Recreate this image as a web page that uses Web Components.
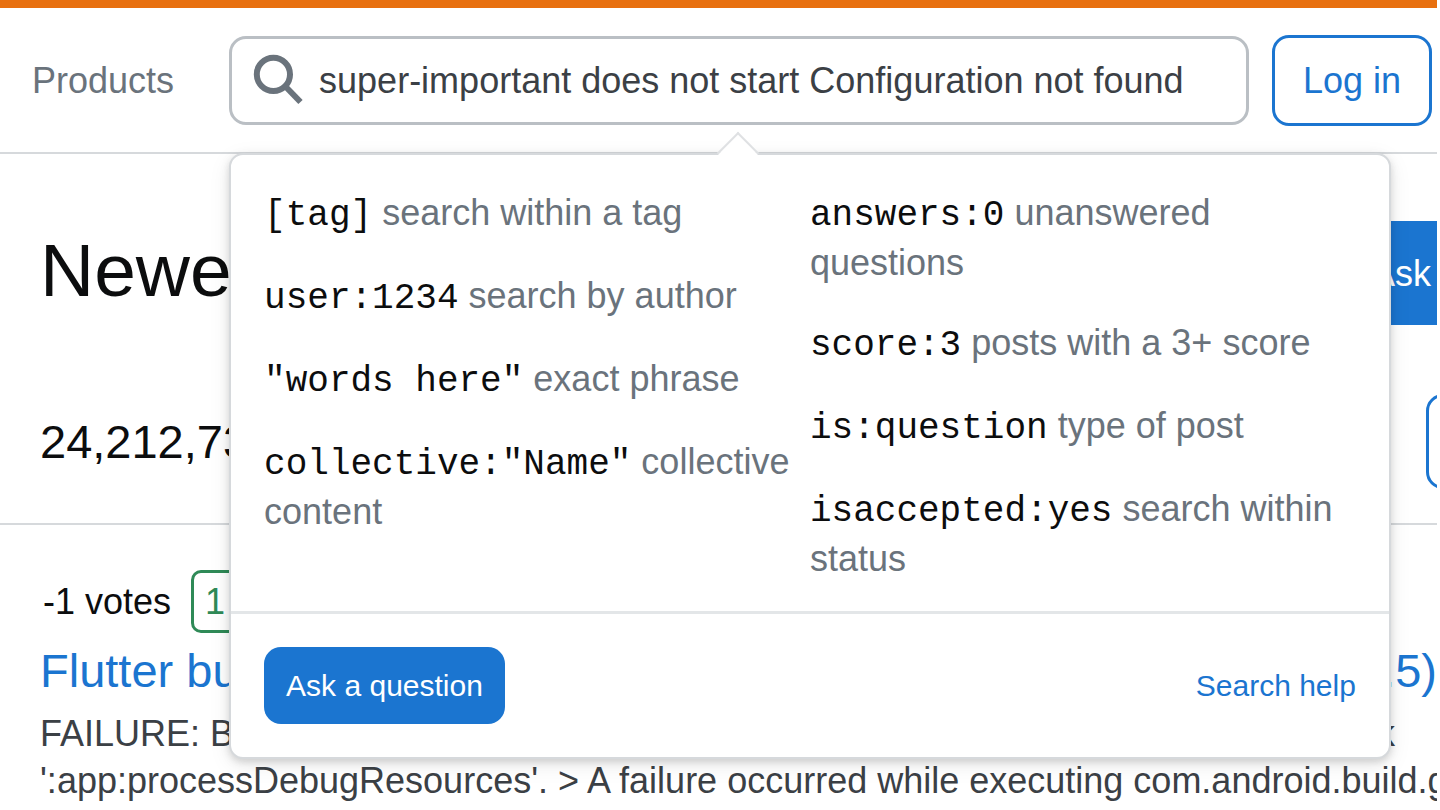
<!DOCTYPE html>
<html lang="en">
<head>
<meta charset="utf-8">
<meta name="viewport" content="width=device-width, initial-scale=1">
<title>Newest Questions</title>
<style>
    :root {
        --orange: #e8700f;
        --blue: #1b75d0;
        --grey: #6a737c;
        --text: #3b4045;
        --line: #d6d9dc;
        --green: #2f8a57;
    }
    body {
        margin: 0;
        background: #fff;
        color: #0c0d0e;
        font: 36px/47px "Liberation Sans", Arial, sans-serif;
    }
</style>
</head>
<body>
<so-page>
    <so-topbar slot="top">
        <so-search value="super-important does not start Configuration not found">
            <so-search-popover>
                <so-hint slot="left" code="[tag]">search within a tag</so-hint>
                <so-hint slot="left" code="user:1234">search by author</so-hint>
                <so-hint slot="left" code='"words here"'>exact phrase</so-hint>
                <so-hint slot="left" code='collective:"Name"'>collective content</so-hint>
                <so-hint slot="right" code="answers:0">unanswered questions</so-hint>
                <so-hint slot="right" code="score:3">posts with a 3+ score</so-hint>
                <so-hint slot="right" code="is:question">type of post</so-hint>
                <so-hint slot="right" code="isaccepted:yes">search within status</so-hint>
            </so-search-popover>
        </so-search>
    </so-topbar>
    <so-question-head></so-question-head>
    <so-question-summary>
        <span slot="votes">-1 votes</span>
        <span slot="answers">1</span>
        <span slot="title">Flutter bu</span>
        <span slot="title-end">.5)</span>
        <span slot="excerpt">FAILURE: B</span>
        <span slot="excerpt-end">k</span>
        <span slot="excerpt-more">':app:processDebugResources'. &gt; A failure occurred while executing com.android.build.g</span>
    </so-question-summary>
</so-page>

<script>
class SoPage extends HTMLElement {
    constructor() {
        super();
        this.attachShadow({ mode: "open" }).innerHTML = `
            <style>
                :host {
                    display: block;
                    min-height: 100vh;
                    margin-right: 3px;
                    overflow: hidden;
                }
            </style>
            <slot name="top"></slot>
            <main><slot></slot></main>
        `;
    }
}

class SoTopbar extends HTMLElement {
    constructor() {
        super();
        this.attachShadow({ mode: "open" }).innerHTML = `
            <style>
                :host {
                    display: block;
                    position: relative;
                    z-index: 1;
                }
                header {
                    display: flex;
                    align-items: center;
                    padding: 27px 5px 26px 32px;
                    border-top: 8px solid var(--orange);
                    border-bottom: 2px solid var(--line);
                }
                .products {
                    margin-right: 55px;
                    color: var(--grey);
                    text-decoration: none;
                }
                ::slotted(so-search) {
                    flex: 1;
                    margin-right: 23px;
                }
                .login {
                    padding: 19px 28px;
                    border: 3px solid var(--blue);
                    border-radius: 17px;
                    background: #fff;
                    color: var(--blue);
                    font: inherit;
                    cursor: pointer;
                }
            </style>
            <header>
                <a class="products" href="#">Products</a>
                <slot></slot>
                <button class="login" type="button">Log in</button>
            </header>
        `;
    }
}

class SoSearch extends HTMLElement {
    constructor() {
        super();
        this.attachShadow({ mode: "open" }).innerHTML = `
            <style>
                :host {
                    display: block;
                    position: relative;
                    min-width: 0;
                }
                form {
                    display: flex;
                    align-items: center;
                    gap: 17px;
                    padding: 17px 21px;
                    border: 3px solid #babfc4;
                    border-radius: 17px;
                    background: #fff;
                }
                svg {
                    flex: none;
                    width: 49px;
                    height: 49px;
                    overflow: visible;
                }
                input {
                    flex: 1;
                    min-width: 0;
                    padding: 0;
                    border: 0;
                    outline: 0;
                    background: none;
                    color: var(--text);
                    font: inherit;
                }
            </style>
            <form role="search">
                <svg viewBox="0 0 49 49" fill="none" stroke="#6a737c" stroke-width="6" aria-hidden="true">
                    <circle cx="20.4" cy="18.4" r="16.6"/>
                    <path d="M31.500 29.500 47.500 46"/>
                </svg>
                <input type="text" aria-label="Search">
            </form>
            <slot></slot>
        `;
    }

    connectedCallback() {
        this.shadowRoot.querySelector("input").value = this.getAttribute("value") || "";
    }
}

class SoSearchPopover extends HTMLElement {
    constructor() {
        super();
        this.attachShadow({ mode: "open" }).innerHTML = `
            <style>
                /* hangs below the search box and runs past its right edge */
                :host {
                    display: block;
                    position: absolute;
                    top: calc(100% + 28px);
                    left: 0;
                    right: -142px;
                    border: 2px solid var(--line);
                    border-radius: 14px;
                    background: #fff;
                    box-shadow: 0 3px 6px rgba(0,0,0,.08), 0 3px 11px rgba(0,0,0,.08), 0 6px 22px rgba(0,0,0,.08);
                }
                .arrow {
                    position: absolute;
                    top: -17px;
                    left: 492px;
                    width: 28px;
                    height: 28px;
                    border: solid #dfe1e3;
                    border-width: 2px 0 0 2px;
                    background: linear-gradient(135deg, #fff 60%, transparent 60%);
                    transform: rotate(45deg);
                }
                .hints {
                    display: flex;
                    padding: 34px 33px 29px;
                }
                .col {
                    display: flex;
                    flex: 1 1 0;
                    flex-direction: column;
                    gap: 33px;
                    min-width: 0;
                }
                .foot {
                    display: flex;
                    align-items: center;
                    justify-content: space-between;
                    padding: 33px;
                    border-top: 3px solid #e3e6e8;
                    font-size: 30px;
                    line-height: 41px;
                }
                button {
                    padding: 18px 22px;
                    border: 0;
                    border-radius: 17px;
                    background: var(--blue);
                    color: #fff;
                    font: inherit;
                    cursor: pointer;
                }
                a {
                    color: var(--blue);
                    text-decoration: none;
                }
            </style>
            <div class="arrow"></div>
            <div class="hints">
                <div class="col"><slot name="left"></slot></div>
                <div class="col"><slot name="right"></slot></div>
            </div>
            <div class="foot">
                <button type="button">Ask a question</button>
                <a href="#">Search help</a>
            </div>
        `;
    }
}

class SoHint extends HTMLElement {
    constructor() {
        super();
        this.attachShadow({ mode: "open" }).innerHTML = `
            <style>
                :host {
                    display: block;
                    color: var(--grey);
                }
                code {
                    color: #0c0d0e;
                    font-family: "Liberation Mono", monospace;
                    font-size: 36px;
                }
            </style>
            <code></code> <slot></slot>
        `;
    }

    connectedCallback() {
        this.shadowRoot.querySelector("code").textContent = this.getAttribute("code");
    }
}

class SoQuestionHead extends HTMLElement {
    constructor() {
        super();
        this.attachShadow({ mode: "open" }).innerHTML = `
            <style>
                :host {
                    display: block;
                    padding-top: 67px;
                    border-bottom: 2px solid var(--line);
                }
                .row {
                    display: flex;
                    justify-content: space-between;
                    padding-left: 40px;
                }
                h1 {
                    margin: 0;
                    font-size: 75px;
                    font-weight: 400;
                    line-height: 98px;
                }
                .ask {
                    padding: 29px 6px 28px 28px;
                    border: 0;
                    background: var(--blue);
                    color: #fff;
                    font: inherit;
                }
                .count {
                    align-items: center;
                    padding-top: 69px;
                    padding-bottom: 34px;
                    font-size: 47px;
                }
                /* the sort button runs off the right edge */
                .sort {
                    width: 120px;
                    height: 95px;
                    margin-right: -109px;
                    border: 3px solid var(--blue);
                    border-radius: 17px;
                    background: #fff;
                }
            </style>
            <div class="row">
                <h1>Newe</h1>
                <button class="ask" type="button">Ask</button>
            </div>
            <div class="row count">
                <span>24,212,73</span>
                <button class="sort" type="button" aria-label="Sort"></button>
            </div>
        `;
    }
}

class SoQuestionSummary extends HTMLElement {
    constructor() {
        super();
        this.attachShadow({ mode: "open" }).innerHTML = `
            <style>
                :host {
                    display: block;
                    padding: 45px 0 0 40px;
                    color: var(--text);
                    white-space: nowrap;
                }
                .stats, .line {
                    display: flex;
                }
                .line {
                    justify-content: space-between;
                }
                .stats {
                    align-items: center;
                    gap: 20px;
                    padding-left: 3px;
                    color: #0c0d0e;
                }
                .answers {
                    padding: 5px 11px;
                    border: 3px solid var(--green);
                    border-radius: 10px;
                    color: var(--green);
                }
                /* the badge continues under the popover */
                .answers::after {
                    content: "";
                    display: inline-block;
                    width: 150px;
                }
                h3 {
                    margin: 6px 0 7px;
                    font-size: 47px;
                    font-weight: 400;
                    line-height: 64px;
                }
                a {
                    color: var(--blue);
                    text-decoration: none;
                }
                .excerpt {
                    padding-right: 42px;
                }
            </style>
            <div class="stats">
                <slot name="votes"></slot>
                <div class="answers"><slot name="answers"></slot></div>
            </div>
            <h3><a class="line" href="#"><slot name="title"></slot><slot name="title-end"></slot></a></h3>
            <div class="line excerpt"><slot name="excerpt"></slot><slot name="excerpt-end"></slot></div>
            <div><slot name="excerpt-more"></slot></div>
        `;
    }
}

customElements.define("so-page", SoPage);
customElements.define("so-topbar", SoTopbar);
customElements.define("so-search", SoSearch);
customElements.define("so-search-popover", SoSearchPopover);
customElements.define("so-hint", SoHint);
customElements.define("so-question-head", SoQuestionHead);
customElements.define("so-question-summary", SoQuestionSummary);
</script>
</body>
</html>
